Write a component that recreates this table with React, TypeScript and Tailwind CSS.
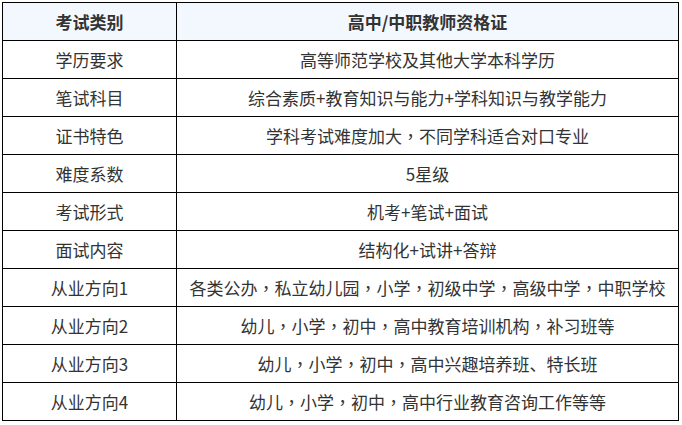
import { Fragment } from 'react'

const rows: [string, string][] = [
  ['学历要求', '高等师范学校及其他大学本科学历'],
  ['笔试科目', '综合素质+教育知识与能力+学科知识与教学能力'],
  ['证书特色', '学科考试难度加大，不同学科适合对口专业'],
  ['难度系数', '5星级'],
  ['考试形式', '机考+笔试+面试'],
  ['面试内容', '结构化+试讲+答辩'],
  ['从业方向1', '各类公办，私立幼儿园，小学，初级中学，高级中学，中职学校'],
  ['从业方向2', '幼儿，小学，初中，高中教育培训机构，补习班等'],
  ['从业方向3', '幼儿，小学，初中，高中兴趣培养班、特长班'],
  ['从业方向4', '幼儿，小学，初中，高中行业教育咨询工作等等'],
]

const cell = 'h-[38px] flex items-center justify-center border-r border-b border-black'

// full-width commas sit centred in the original font, so render them with the TC face
function Text({ value }: { value: string }) {
  const parts = value.split('，')
  return (
    <span>
      {parts.map((p, i) => (
        <Fragment key={i}>
          {p}
          {i < parts.length - 1 && <span className="font-['Noto_Sans_CJK_TC',sans-serif]">，</span>}
        </Fragment>
      ))}
    </span>
  )
}

export default function App() {
  return (
    <div className="w-[682px] h-[425px] bg-white pt-[2px] pl-[2px] text-[#333] text-[17px] font-['Microsoft_YaHei','Noto_Sans_CJK_SC',sans-serif]">
      <div className="grid grid-cols-[174px_502px] w-[677px] border-l border-t border-black">
        <div className={`${cell} bg-[#f3f8fe] font-bold`}>考试类别</div>
        <div className={`${cell} bg-[#f3f8fe] font-bold`}>高中/中职教师资格证</div>
        {rows.map(([k, v]) => (
          <Fragment key={k}>
            <div className={cell}>{k}</div>
            <div className={cell}>
              <Text value={v} />
            </div>
          </Fragment>
        ))}
      </div>
    </div>
  )
}
